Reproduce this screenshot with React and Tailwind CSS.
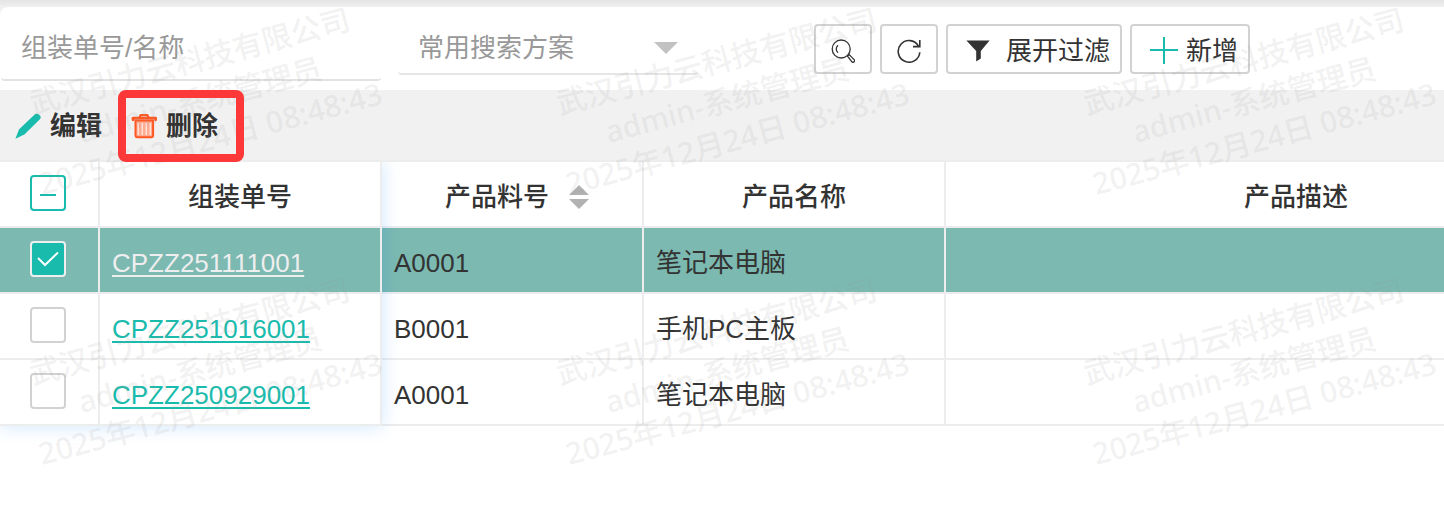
import React, { useState } from 'react';

const initialRows = [
  { id: 'CPZZ251111001', code: 'A0001', name: '笔记本电脑', desc: '' },
  { id: 'CPZZ251016001', code: 'B0001', name: '手机PC主板', desc: '' },
  { id: 'CPZZ250929001', code: 'A0001', name: '笔记本电脑', desc: '' },
];

const SearchIcon = () => (
  <svg className="size-6" viewBox="0 0 24 24" fill="none" stroke="currentColor" strokeWidth="1.3">
    <circle cx="10.2" cy="10" r="9" />
    <path d="M7 13.8A5 5 0 0 1 7 6.2" />
    <path d="M16.6 17.2l1.6-1.6 4.9 5a1.5 1.5 0 0 1-2.2 2.2z" />
  </svg>
);

const RefreshIcon = () => (
  <svg className="size-6" viewBox="0 0 24 24" fill="none" stroke="currentColor" strokeWidth="1.6">
    <path d="M22.8 13.2A10.8 10.8 0 1 1 21.4 7" />
    <path d="M22.8 1v6.6h-6.8" />
  </svg>
);

const FilterIcon = () => (
  <svg className="h-[22px] w-6" viewBox="0 0 24 22" fill="currentColor">
    <path d="M.4.4h23.2L14.8 11v7.4l-4.6 3.2V11z" />
  </svg>
);

const PlusIcon = () => (
  <svg className="size-7 text-[#18bbac]" viewBox="0 0 28 28" fill="none" stroke="currentColor" strokeWidth="2">
    <path d="M14 0v27M0 13h28" />
  </svg>
);

const PencilIcon = () => (
  <svg className="size-[26px] text-[#18bbac]" viewBox="0 0 26 26" fill="currentColor">
    <path d="M.4 25.8L4 16.4 19.4 1.8C20.6.7 22 .4 23.200 1l2 1.800c.8 1.200.6 2.600-.6 3.800L9.400 21.400z" />
  </svg>
);

const TrashIcon = () => (
  <svg className="size-[26px]" viewBox="0 0 26 26" fill="none" stroke="#ff5722">
    <path d="M4.500 7.500h17.600v15.300a1.400 1.400 0 0 1-1.400 1.400H5.900a1.400 1.400 0 0 1-1.400-1.400z" fill="#ffab91" strokeWidth="2" />
    <path d="M7.300 10v12M11.300 10v12M15.300 10v12M19.300 10v12" stroke="#ffe3da" strokeWidth="1.400" />
    <path d="M2 6.800V5.200h22.600v1.600" strokeWidth="2.800" strokeLinejoin="round" strokeLinecap="round" />
    <path d="M8.500 4.500l1.200-2.300h6.600l1.200 2.300" strokeWidth="2.200" />
  </svg>
);

const CheckBox = ({ label, checked, partial, onChange }) => (
  <label className="mx-auto grid size-9 cursor-pointer place-items-center">
    <input
      type="checkbox"
      aria-label={label}
      checked={checked}
      onChange={onChange}
      className={`col-start-1 row-start-1 size-9 appearance-none rounded border-2 ${
        partial
          ? 'border-[#18bbac] bg-white'
          : checked
            ? 'border-[#eeeeee] bg-[#18bbac]'
            : 'border-[#d2d2d2] bg-white'
      }`}
    />
    {partial && <span className="col-start-1 row-start-1 mt-1 h-0.5 w-4 bg-[#18bbac]" />}
    {!partial && checked && (
      <svg className="col-start-1 row-start-1 h-4 w-[22px]" viewBox="0 0 22 16" fill="none" stroke="#fff" strokeWidth="2">
        <path d="M1 7l7 7L21 1.5" />
      </svg>
    )}
  </label>
);

const ToolButton = ({ children, className, ...props }) => (
  <button
    type="button"
    className={`flex h-[50px] items-center rounded border-2 border-[#d2d2d2] bg-white pt-1 whitespace-nowrap ${className}`}
    {...props}
  >
    {children}
  </button>
);

// Tanda air diulang di seluruh halaman
const Watermark = () => (
  <div
    aria-hidden="true"
    className="pointer-events-none absolute inset-x-0 top-0 z-30 grid h-full grid-cols-[repeat(3,527px)] grid-rows-[repeat(2,270px)] overflow-hidden pt-10 font-['Noto_Sans','Noto_Sans_CJK_SC',sans-serif] text-[30px] leading-10 font-medium text-[#999999]/15"
  >
    {[0, 1, 2, 3, 4, 5].map((n) => (
      <div key={n} className="flex h-[120px] w-[400px] -rotate-15 flex-col items-center whitespace-nowrap">
        <p>武汉引力云科技有限公司</p>
        <p>admin-系统管理员</p>
        <p>2025年12月24日 08:48:43</p>
      </div>
    ))}
  </div>
);

const checkCell = 'h-[66px] border-r-2 border-b-2 border-[#ededed] pr-0.5 pb-0.5';
const headCell = 'h-[66px] border-r-2 border-b-2 border-[#ededed] px-3 pt-1.5 text-center font-medium';
const bodyCell = 'h-[66px] border-r-2 border-b-2 border-[#ededed] px-3 pt-1.5';

const App = () => {
  const [selected, setSelected] = useState(['CPZZ251111001']);

  const toggle = (id) =>
    setSelected((prev) => (prev.includes(id) ? prev.filter((x) => x !== id) : [...prev, id]));

  const all = selected.length === initialRows.length;
  const toggleAll = () => setSelected(all ? [] : initialRows.map((r) => r.id));

  return (
    <div className="relative min-h-screen overflow-hidden bg-white font-['Liberation_Sans','Noto_Sans_CJK_SC',sans-serif] text-[26px] leading-9 text-[#333333]">
      <div className="bg-[#f0f0f0]">
        <div className="h-[7px] bg-linear-to-b from-[#e4e4e4] to-[#f0f0f0]" />
        <div className="flex h-[83px] items-center gap-[17px] rounded-tl-lg bg-white pt-px pl-px">
          <input
            type="text"
            aria-label="组装单号/名称"
            placeholder="组装单号/名称"
            className="h-16 w-[380px] shrink-0 rounded border-b-2 border-[#e2e2e2] px-5 outline-none placeholder:text-[#999999]"
          />
          <div className="grid shrink-0 items-center">
            <select
              aria-label="常用搜索方案"
              className="col-start-1 row-start-1 h-[52px] w-[300px] appearance-none rounded border-b-2 border-[#e6e6e6] bg-transparent px-5 text-[#999999] outline-none"
            >
              <option>常用搜索方案</option>
            </select>
            <svg className="pointer-events-none col-start-1 row-start-1 mr-5 mb-0.5 h-3 w-6 justify-self-end" viewBox="0 0 24 12" fill="#c2c2c2">
              <path d="M0 0h24L12 12z" />
            </svg>
          </div>
          <div className="ml-[99px] flex gap-2">
            <ToolButton className="w-[58px] justify-center" aria-label="搜索">
              <SearchIcon />
            </ToolButton>
            <ToolButton className="w-[58px] justify-center" aria-label="刷新">
              <RefreshIcon />
            </ToolButton>
            <ToolButton className="w-44 justify-between pr-2.5 pl-[18px]">
              <FilterIcon />
              展开过滤
            </ToolButton>
            <ToolButton className="w-[120px] justify-between pr-2.5 pl-[18px]">
              <PlusIcon />
              新增
            </ToolButton>
          </div>
        </div>
      </div>

      <div className="flex h-[70px] items-center gap-[29px] bg-[#f1f1f1] pt-0.5 pl-[15px] font-bold">
        <button type="button" className="flex items-center gap-[9px]">
          <PencilIcon />
          编辑
        </button>
        <button type="button" className="relative flex items-center gap-[9px]">
          <TrashIcon />
          删除
          <span className="pointer-events-none absolute -top-[18px] -right-[26px] -bottom-[18px] -left-[13px] z-40 rounded-lg border-8 border-[#fc3838]" />
        </button>
      </div>

      <div className="relative overflow-hidden pb-8">
        <table className="w-full min-w-[1648px] table-fixed border-separate border-spacing-0 border-t-2 border-[#ededed]">
          <colgroup>
            <col className="w-[100px]" />
            <col className="w-[282px]" />
            <col className="w-[262px]" />
            <col className="w-[302px]" />
            <col />
          </colgroup>
          <thead>
            <tr>
              <th className={checkCell}>
                <CheckBox label="全选" checked={all} partial={selected.length > 0 && !all} onChange={toggleAll} />
              </th>
              <th className={headCell}>组装单号</th>
              <th className={headCell}>
                <span className="flex items-center justify-center gap-5 pl-2.5">
                  产品料号
                  <svg className="h-6 w-5" viewBox="0 0 20 24" fill="#b2b2b2">
                    <path d="M10 0l10 10H0zM0 14h20L10 24z" />
                  </svg>
                </span>
              </th>
              <th className={headCell}>产品名称</th>
              <th className={headCell}>产品描述</th>
            </tr>
          </thead>
          <tbody>
            {initialRows.map((row) => {
              const on = selected.includes(row.id);
              return (
                <tr key={row.id} className={on ? 'bg-[#7bb9b1]' : 'bg-white'}>
                  <td className={checkCell}>
                    <CheckBox label={row.id} checked={on} onChange={() => toggle(row.id)} />
                  </td>
                  <td className={bodyCell}>
                    <a
                      href={`#${row.id}`}
                      className={`underline decoration-2 underline-offset-3 ${on ? 'text-[#eeeeee]' : 'text-[#18bbac]'}`}
                    >
                      {row.id}
                    </a>
                  </td>
                  <td className={bodyCell}>{row.code}</td>
                  <td className={bodyCell}>{row.name}</td>
                  <td className={bodyCell}>{row.desc}</td>
                </tr>
              );
            })}
          </tbody>
        </table>
        {/* bayangan kolom yang dibekukan, dipotong di tepi atas */}
        <div className="pointer-events-none absolute inset-x-0 top-0.5 bottom-0 overflow-hidden pb-8">
          <div className="h-full w-[382px] shadow-[0_0_18px_rgba(0,132,255,0.2)]" />
        </div>
      </div>

      <Watermark />
    </div>
  );
};

export default App;
